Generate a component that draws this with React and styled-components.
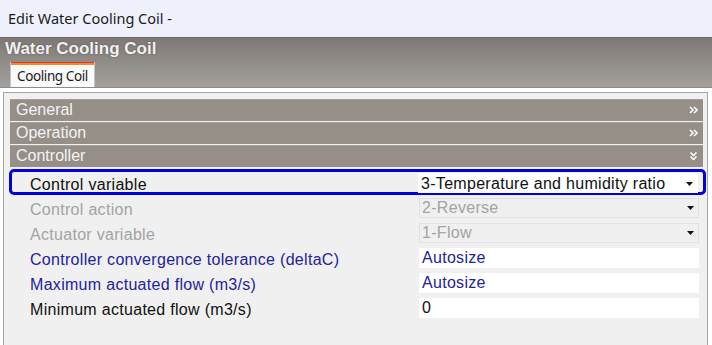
import React from "react";
import styled, { createGlobalStyle } from "styled-components";

const GlobalStyle = createGlobalStyle`
  html, body {
    margin: 0;
    padding: 0;
    background: #ffffff;
  }
`;

const Window = styled.div`
  width: 712px;
  height: 345px;
  display: flex;
  flex-direction: column;
  overflow: hidden;
  font-family: "Liberation Sans", Arial, sans-serif;
`;

const TitleBar = styled.div`
  height: 37px;
  flex: none;
  display: flex;
  align-items: center;
  padding: 0 0 2px 8px;
  box-sizing: border-box;
  background: #eef1fb;
  color: #1b1b1b;
  font: 14.5px "Noto Sans", "Open Sans", sans-serif;
`;

const Banner = styled.div`
  height: 51px;
  flex: none;
  box-sizing: border-box;
  display: flex;
  flex-direction: column;
  justify-content: space-between;
  background: linear-gradient(#7e7973, #a3a09d);
  border-top: 1px solid #6e6a66;
  border-bottom: 1px solid #8e8c8a;
`;

const Heading = styled.div`
  padding: 1px 0 0 5px;
  color: #f1f1f1;
  font: bold 17px "Liberation Sans", Arial, sans-serif;
  text-shadow: 0 0 2px rgba(60, 55, 50, 0.6);
`;

const TabStrip = styled.div`
  display: flex;
  padding-left: 10px;
`;

const Tab = styled.div`
  width: 85px;
  height: 25px;
  box-sizing: border-box;
  padding-top: 3px;
  display: flex;
  align-items: center;
  justify-content: center;
  background: linear-gradient(#df3b28 0, #df3b28 1px, #f48a2c 1px, #f48a2c 3px, #fbfbfb 3px);
  border-left: 1px solid #c4c4c4;
  border-right: 1px solid #c4c4c4;
  color: #1a1a1a;
  font: 13.5px "Noto Sans", "Open Sans", sans-serif;
  letter-spacing: -0.4px;
`;

const Body = styled.div`
  flex: 1;
  display: flex;
  padding: 4px 4px 0 3px;
  background: #ffffff;
`;

const Panel = styled.div`
  flex: 1;
  display: flex;
  flex-direction: column;
  padding: 6px 4px 0 6px;
  background: #f0f0f0;
  border: 1px solid #a4a4a4;
  border-bottom: none;
`;

const SectionHeader = styled.div`
  height: 22px;
  margin-bottom: 1px;
  box-sizing: border-box;
  display: flex;
  align-items: center;
  justify-content: space-between;
  padding: 0 5px 1px 6px;
  background: #958f88;
  border-top: 1px solid #a39e98;
  color: #f3f3f3;
  font-size: 16px;
`;

const Rows = styled.div`
  display: flex;
  flex-direction: column;
`;

const Row = styled.div`
  height: 25px;
  display: grid;
  grid-template-columns: 1fr 280px;
  align-items: center;
  padding: 0 4px 0 20px;
`;

const SelectedRow = styled(Row)`
  height: 26px;
  box-sizing: border-box;
  margin: 1px -3px 0 -1px;
  padding: 0 5px 0 18px;
  border: 3px solid #0000dc;
  border-radius: 5px;
`;

const tones = {
  normal: "#111111",
  muted: "#a3a3a3",
  blue: "#23239b",
};

const Label = styled.div`
  color: ${(p) => tones[p.$tone]};
  font-size: 16px;
  letter-spacing: 0.3px;
  white-space: nowrap;
  padding-top: 4px;
`;

const ValueBox = styled.div`
  height: 20px;
  box-sizing: border-box;
  display: flex;
  align-items: center;
  justify-content: space-between;
  padding: 1px 4px 0 2px;
  background: ${(p) => (p.$tone === "muted" ? "#f0f0f0" : "#ffffff")};
  border: 1px solid ${(p) => (p.$tone === "muted" ? "#e1e1e1" : "#ffffff")};
  color: ${(p) => tones[p.$tone]};
  font-size: 16px;
  letter-spacing: 0.3px;
  white-space: nowrap;
`;

const Arrow = () => (
  <svg width="7" height="4" viewBox="0 0 7 4">
    <path d="M0 0h7L3.5 4z" fill="#111" />
  </svg>
);

const Chevrons = ({ down }) => (
  <svg width="9" height="8" viewBox="0 0 9 8" style={down ? { transform: "rotate(90deg)" } : null}>
    <path d="M1 1l3 3-3 3M5 1l3 3-3 3" fill="none" stroke="#fafafa" strokeWidth="1.7" />
  </svg>
);

const sections = [
  { name: "General" },
  { name: "Operation" },
  { name: "Controller", open: true },
];

const fields = [
  { label: "Control action", value: "2-Reverse", tone: "muted", select: true },
  { label: "Actuator variable", value: "1-Flow", tone: "muted", select: true },
  { label: "Controller convergence tolerance (deltaC)", value: "Autosize", tone: "blue" },
  { label: "Maximum actuated flow (m3/s)", value: "Autosize", tone: "blue" },
  { label: "Minimum actuated flow (m3/s)", value: "0", tone: "normal" },
];

const App = () => {
  return (
    <Window>
      <GlobalStyle />
      <TitleBar>Edit Water Cooling Coil -</TitleBar>
      <Banner>
        <Heading>Water Cooling Coil</Heading>
        <TabStrip>
          <Tab>Cooling Coil</Tab>
        </TabStrip>
      </Banner>
      <Body>
        <Panel>
          {sections.map((s) => (
            <SectionHeader key={s.name}>
              {s.name}
              <Chevrons down={s.open} />
            </SectionHeader>
          ))}
          <Rows>
            <SelectedRow>
              <Label $tone="normal">Control variable</Label>
              <ValueBox $tone="normal">
                3-Temperature and humidity ratio
                <Arrow />
              </ValueBox>
            </SelectedRow>
            {fields.map((f) => (
              <Row key={f.label}>
                <Label $tone={f.tone}>{f.label}</Label>
                <ValueBox $tone={f.tone}>
                  {f.value}
                  {f.select && <Arrow />}
                </ValueBox>
              </Row>
            ))}
          </Rows>
        </Panel>
      </Body>
    </Window>
  );
};

export default App;
